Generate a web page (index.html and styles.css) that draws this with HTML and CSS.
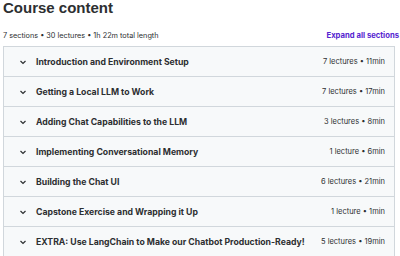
FILE: index.html
```html
<!DOCTYPE html>
<html lang="en">
<head>
  <meta charset="UTF-8">
  <title>Course content</title>
  <link rel="stylesheet" href="styles.css">
</head>
<body>
  <div class="curriculum">
    <h2 class="curriculum-title">Course content</h2>
    <div class="curriculum-meta">
      <span>7 sections • 30 lectures • 1h 22m total length</span>
      <button class="expand-all">Expand all sections</button>
    </div>
    <div class="sections">
      <div class="section">
        <span class="chevron"><svg width="8" height="8" viewBox="0 0 8 8"><path d="M1.5 3 L4 5.5 L6.5 3" fill="none" stroke="#2d2f31" stroke-width="1.2"/></svg></span>
        <span class="section-title">Introduction and Environment Setup</span>
        <span class="section-info">7 lectures • 11min</span>
      </div>
      <div class="section">
        <span class="chevron"><svg width="8" height="8" viewBox="0 0 8 8"><path d="M1.5 3 L4 5.5 L6.5 3" fill="none" stroke="#2d2f31" stroke-width="1.2"/></svg></span>
        <span class="section-title">Getting a Local LLM to Work</span>
        <span class="section-info">7 lectures • 17min</span>
      </div>
      <div class="section">
        <span class="chevron"><svg width="8" height="8" viewBox="0 0 8 8"><path d="M1.5 3 L4 5.5 L6.5 3" fill="none" stroke="#2d2f31" stroke-width="1.2"/></svg></span>
        <span class="section-title">Adding Chat Capabilities to the LLM</span>
        <span class="section-info">3 lectures • 8min</span>
      </div>
      <div class="section">
        <span class="chevron"><svg width="8" height="8" viewBox="0 0 8 8"><path d="M1.5 3 L4 5.5 L6.5 3" fill="none" stroke="#2d2f31" stroke-width="1.2"/></svg></span>
        <span class="section-title">Implementing Conversational Memory</span>
        <span class="section-info">1 lecture • 6min</span>
      </div>
      <div class="section">
        <span class="chevron"><svg width="8" height="8" viewBox="0 0 8 8"><path d="M1.5 3 L4 5.5 L6.5 3" fill="none" stroke="#2d2f31" stroke-width="1.2"/></svg></span>
        <span class="section-title">Building the Chat UI</span>
        <span class="section-info">6 lectures • 21min</span>
      </div>
      <div class="section">
        <span class="chevron"><svg width="8" height="8" viewBox="0 0 8 8"><path d="M1.5 3 L4 5.5 L6.5 3" fill="none" stroke="#2d2f31" stroke-width="1.2"/></svg></span>
        <span class="section-title">Capstone Exercise and Wrapping it Up</span>
        <span class="section-info">1 lecture • 1min</span>
      </div>
      <div class="section">
        <span class="chevron"><svg width="8" height="8" viewBox="0 0 8 8"><path d="M1.5 3 L4 5.5 L6.5 3" fill="none" stroke="#2d2f31" stroke-width="1.2"/></svg></span>
        <span class="section-title">EXTRA: Use LangChain to Make our Chatbot Production-Ready!</span>
        <span class="section-info">5 lectures • 19min</span>
      </div>
    </div>
  </div>
</body>
</html>
```

FILE: styles.css
```css
body {
  margin: 0;
  background: #ffffff;
  font-family: Inter, "Liberation Sans", Arial, sans-serif;
  color: #2d2f31;
}

.curriculum {
  width: 396px;
  padding: 0 0 0 3px;
}

.curriculum-title {
  margin: 0;
  font-family: "Liberation Sans", Arial, sans-serif;
  font-size: 15px;
  font-weight: 700;
  line-height: 16px;
}

.curriculum-meta {
  display: flex;
  justify-content: space-between;
  align-items: center;
  margin-top: 13px;
  height: 12px;
  font-size: 7.3px;
  color: #2d2f31;
}

.expand-all {
  background: none;
  border: none;
  padding: 0;
  font-family: inherit;
  font-size: 7.7px;
  font-weight: 700;
  color: #5624d0;
}

.sections {
  margin-top: 5px;
  width: 390px;
  border: 1px solid #d1d7dc;
  border-bottom: none;
}

.section {
  display: flex;
  align-items: center;
  height: 29px;
  background: #f7f9fa;
  border-bottom: 1px solid #d1d7dc;
  padding: 0 9px 0 15px;
}

.chevron {
  display: flex;
  width: 17px;
}

.section-title {
  flex: 1;
  font-size: 8.7px;
  font-weight: 700;
  white-space: nowrap;
}

.section-info {
  font-size: 7.5px;
  color: #2d2f31;
  white-space: nowrap;
}
```
